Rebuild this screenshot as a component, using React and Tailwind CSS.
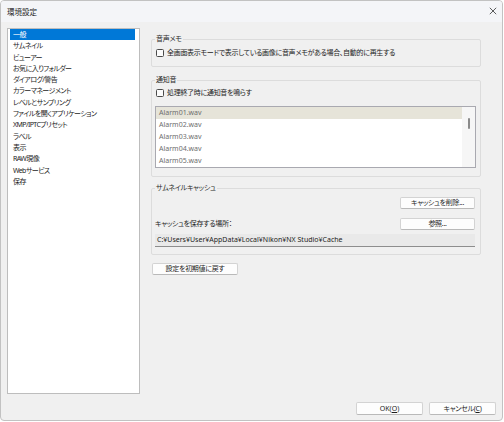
const cats = [
  "一般",
  "サムネイル",
  "ビューアー",
  "お気に入りフォルダー",
  "ダイアログ/警告",
  "カラーマネージメント",
  "レベルとサンプリング",
  "ファイルを開くアプリケーション",
  "XMP/IPTCプリセット",
  "ラベル",
  "表示",
  "RAW現像",
  "Webサービス",
  "保存",
];

const alarms = ["Alarm01.wav", "Alarm02.wav", "Alarm03.wav", "Alarm04.wav", "Alarm05.wav"];

function Check({ label }) {
  return (
    <div className="flex items-center h-[10px] ml-[4px]">
      <span className="w-[8px] h-[8px] border border-[#4a4a4a] rounded-[1.5px] bg-[#fbfbfb] shrink-0" />
      <span className="ml-[3px] leading-[10px] whitespace-nowrap">{label}</span>
    </div>
  );
}

function Btn({ children, className = "" }) {
  return (
    <div
      className={
        "h-[12px] flex items-center justify-center bg-[#fdfdfd] border border-[#d3d3d3] border-b-[#b9b9b9] rounded-[2px] leading-[10px] whitespace-nowrap " +
        className
      }
    >
      {children}
    </div>
  );
}

export default function App() {
  return (
    <div className="w-[504px] h-[422px] bg-white font-['Noto_Sans','Noto_Sans_CJK_JP',sans-serif] [font-feature-settings:'palt'] text-[7px] tracking-[-0.3px] text-[#1c1c1c]">
      <div className="w-[503px] h-[421px] border border-[#c2c2c2] rounded-[4px] overflow-hidden flex flex-col bg-[#f0f0f0]">
        {/* title bar */}
        <div className="h-[21px] shrink-0 bg-[#f4f5f8] flex items-center justify-between pl-[6px] pr-[5px]">
          <span className="text-[7.5px] leading-[10px] tracking-normal">環境設定</span>
          <svg width="8" height="8" viewBox="0 0 8 8" className="mb-[1px]">
            <path d="M0.8 0.8 L7.2 7.2 M7.2 0.8 L0.8 7.2" stroke="#333" strokeWidth="0.8" fill="none" />
          </svg>
        </div>

        {/* body */}
        <div className="flex-1 flex flex-col pt-[6px] pl-[6px]">
          <div className="flex h-[366px]">
            {/* category list */}
            <div className="w-[133px] h-full border border-[#bdbdbd] bg-white pl-[2px] pr-[4px] tracking-[-0.6px]">
              {cats.map((c, i) => (
                <div
                  key={c}
                  className={
                    "h-[11.3px] leading-[11.3px] pl-[3px] whitespace-nowrap " +
                    (i === 0 ? "bg-[#0078d7] text-white" : "")
                  }
                >
                  {c}
                </div>
              ))}
            </div>

            {/* right column */}
            <div className="ml-[11px] w-[330px] flex flex-col">
              {/* 音声メモ */}
              <fieldset className="mt-[6px] border border-[#dcdcdc] rounded-[2px] pb-[8px]">
                <legend className="ml-[3px] px-[1px] h-[10px] leading-[10px] text-[#2a2a2a]">音声メモ</legend>
                <div className="mt-[4px]">
                  <Check label="全画面表示モードで表示している画像に音声メモがある場合、自動的に再生する" />
                </div>
              </fieldset>

              {/* 通知音 */}
              <fieldset className="mt-[8px] border border-[#dcdcdc] rounded-[2px] pb-[8px]">
                <legend className="ml-[3px] px-[1px] h-[10px] leading-[10px] text-[#2a2a2a]">通知音</legend>
                <div className="mt-[3px]">
                  <Check label="処理終了時に通知音を鳴らす" />
                </div>
                <div className="mt-[8px] ml-[3px] w-[321px] h-[62px] border border-[#a9a9b0] bg-white flex tracking-normal">
                  <div className="flex-1">
                    {alarms.map((a, i) => (
                      <div
                        key={a}
                        className={
                          "h-[12px] leading-[12px] pl-[3px] text-[#6e6e6e] " +
                          (i === 0 ? "bg-[#e6e4d9]" : "")
                        }
                      >
                        {a}
                      </div>
                    ))}
                  </div>
                  <div className="w-[13px] bg-[#f6f6f6] flex justify-center pt-[11px]">
                    <div className="w-[2px] h-[11px] rounded-full bg-[#8a8a8a]" />
                  </div>
                </div>
              </fieldset>

              {/* サムネイルキャッシュ */}
              <fieldset className="mt-[6px] border border-[#dcdcdc] rounded-[2px] pb-[7px]">
                <legend className="ml-[3px] px-[1px] h-[10px] leading-[10px] text-[#2a2a2a]">サムネイルキャッシュ</legend>
                <div className="mt-[4px] flex justify-end pr-[5px]">
                  <Btn className="w-[75px]">キャッシュを削除...</Btn>
                </div>
                <div className="mt-[9px] flex items-center justify-between pl-[3px] pr-[5px]">
                  <span className="leading-[10px]">キャッシュを保存する場所：</span>
                  <Btn className="w-[75px]">参照...</Btn>
                </div>
                <div className="mt-[4px] ml-[3px] mr-[5px] h-[13px] bg-[#e9e9e9] border-b border-b-[#8d8d8d] flex items-center pl-[2px] whitespace-nowrap tracking-normal">
                  C:¥Users¥User¥AppData¥Local¥Nikon¥NX Studio¥Cache
                </div>
              </fieldset>

              <div className="mt-[8px] ml-[1px]">
                <Btn className="w-[86px]">設定を初期値に戻す</Btn>
              </div>
            </div>
          </div>

          {/* bottom buttons */}
          <div className="mt-[8px] flex justify-end gap-[6px] pr-[6px]">
            <Btn className="w-[67px] h-[13px] border-[#3a7cc9] border-b-[#3a7cc9] tracking-normal">
              OK(<span className="underline">O</span>)
            </Btn>
            <Btn className="w-[67px] h-[13px]">
              キャンセル(<span className="underline">C</span>)
            </Btn>
          </div>
        </div>
      </div>
    </div>
  );
}
